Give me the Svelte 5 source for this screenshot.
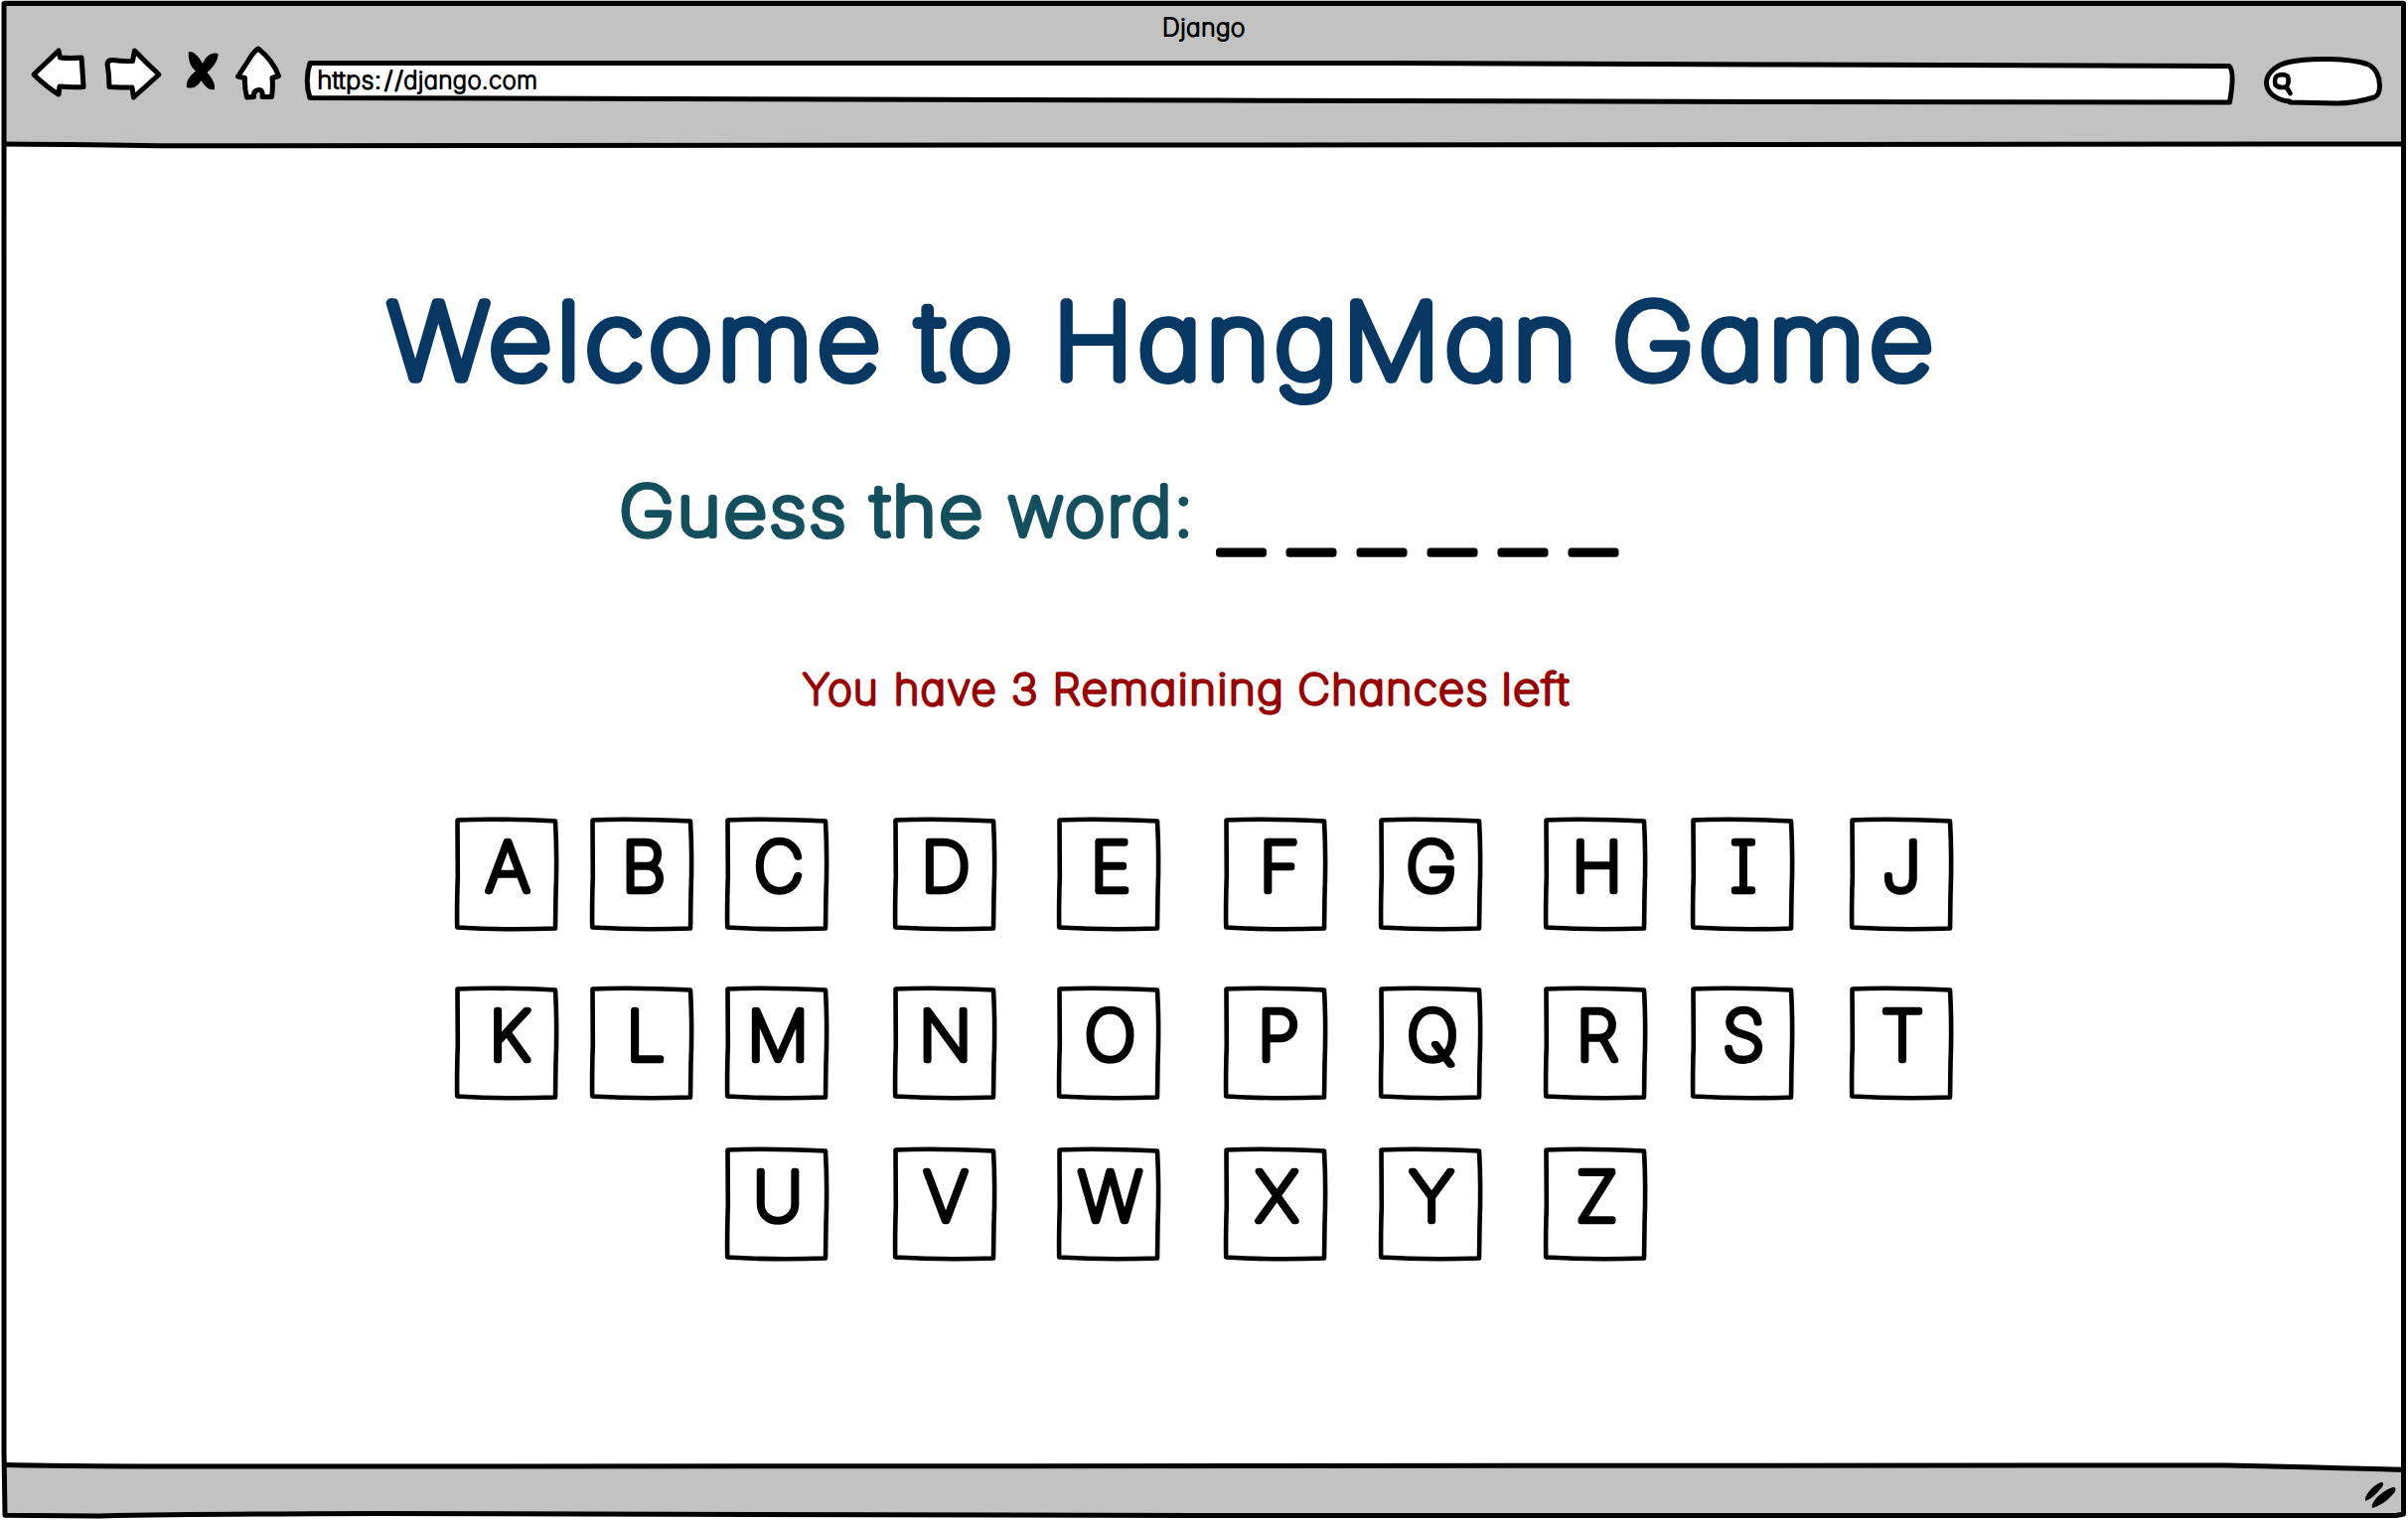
<script>
  // Each word carries its left edge and drawn width inside the line.
  const title = [
    { t: 'Welcome', x: 390, w: 501 },
    { t: 'to', x: 923, w: 101 },
    { t: 'HangMan', x: 1060, w: 532 },
    { t: 'Game', x: 1623, w: 328 }
  ];
  const guess = [
    { t: 'Guess', x: 623.5, w: 231 },
    { t: 'the', x: 877, w: 115 },
    { t: 'word:', x: 1014.5, w: 189 }
  ];
  const blanks = [1249.5, 1320, 1391, 1462, 1533, 1604];
  const chances = [
    { t: 'You', x: 808, w: 77 },
    { t: 'have', x: 900, w: 104 },
    { t: '3', x: 1018, w: 28 },
    { t: 'Remaining', x: 1059.5, w: 234 },
    { t: 'Chances', x: 1306.5, w: 192.5 },
    { t: 'left', x: 1511.5, w: 69 }
  ];
  const address = [
    { t: 'https:', x: 319.5, w: 65 },
    { t: '/', x: 387, w: 9 },
    { t: '/', x: 397.5, w: 9 },
    { t: 'django.com', x: 406.5, w: 135 }
  ];

  // Letter with the horizontal centre of its glyph inside the key.
  const rows = [
    [['A', 53], ['B', 54], ['C', 54], ['D', 53], ['E', 54], ['F', 56], ['G', 53], ['H', 53.5], ['I', 53], ['J', 52]],
    [['K', 55], ['L', 56], ['M', 53], ['N', 52.5], ['O', 53.5], ['P', 55], ['Q', 54], ['R', 54], ['S', 53], ['T', 53]],
    [null, null, ['U', 53], ['V', 53], ['W', 53.5], ['X', 53.5], ['Y', 53], ['Z', 53.5], null, null]
  ];
</script>

{#snippet words(list, y)}
  {#each list as word}
    <text x={word.x} {y} textLength={word.w} lengthAdjust="spacingAndGlyphs">{word.t}</text>
  {/each}
{/snippet}

<div class="window">
  <header>
    <div class="caption"><svg width="120" height="40"><text x="60" y="33.5" text-anchor="middle" textLength="84" lengthAdjust="spacingAndGlyphs">Django</text></svg></div>
    <nav>
      <svg class="back" width="60" height="60" viewBox="28 45 60 60">
        <path class="ink" d="M34 75 59 51 60.5 58Q70 59 82 58Q83 70 84 87.500Q72 88 60 87L59 95Q46 87 34 75Z" />
      </svg>
      <svg class="forward" width="64" height="60" viewBox="102 45 64 60">
        <path class="ink" d="M108 64Q109 60 114 60.500Q122 62 133.500 61.500L135.500 51Q147 63 160 75L134.500 98 133 88Q122 88 110 87.500Q110 75 108 64Z" />
      </svg>
      <svg class="stop" width="40" height="60" viewBox="184 45 40 60">
        <path d="M190 52C195 51 201 58 204 64C207 56 214 52 219.500 54C220 61 214 68 208.500 73C213 78 217 84 216 90C210 92 205 85 202.500 81C199 87 194 90 188 88C187 82 191 76 197 71.500C191 67 189 58 190 52Z" />
      </svg>
      <svg class="home" width="52" height="60" viewBox="234 43 52 60">
        <path class="ink" d="M260 49Q255 52 250 61L239.500 77 246.500 78.500Q246 88 248.500 98L255.500 97.500Q255 91 260.500 90.500Q265 90 264 97.500L273.500 97.500Q275 88 274 78.500L280.500 76.500Q275 61 260 49Z" />
      </svg>
      <svg class="address" width="1950" height="50" viewBox="304 58 1950 50">
        <path class="ink" d="M312 63.500L1400 63.500 1800 65 2244 66.500Q2250 72 2244.500 103L1800 102.500 1220 101 312 98.500Q306.500 82 312 63.500Z" />
        {@render words(address, 89)}
      </svg>
      <svg class="search" width="126" height="56" viewBox="2276 54 126 56">
        <path class="ink" d="M2305 102C2291 101 2281.500 93 2281.500 83C2282 72 2293 65 2304 62.500C2327 57.500 2366 59 2383 64.500C2392 68 2395.500 78 2395.500 86Q2395.500 96 2390 98Q2370 104 2353 104Q2330 103.500 2305 103" />
        <path class="lens" d="M2292 76.500Q2298 73.500 2303 77Q2305 84 2301 87.500Q2294 89 2290.500 85.500Q2289 79 2292 76.500ZM2301.500 87.500L2305.500 94" />
      </svg>
    </nav>
  </header>

  <main>
    <h1><svg width="2424" height="130">{@render words(title, 97)}</svg></h1>
    <div class="guess">
      <svg width="2424" height="110">
        <g class="prompt">{@render words(guess, 71)}</g>
        <g class="blanks">
          {#each blanks as x}<text {x} y="87" text-anchor="middle">_</text>{/each}
        </g>
      </svg>
    </div>
    <p><svg width="2424" height="60">{@render words(chances, 46.5)}</svg></p>
    <div class="keys">
      {#each rows as row}
        <div class="row">
          {#each row as key}
            {#if key}
              <button aria-label={key[0]}>
                <svg width="104" height="116" viewBox="0 0 104 116">
                  <path class="edge" d="M2.500 3.500Q40 1.500 101 4.500Q103 40 101.500 78L101 112.500Q50 114.500 2.200 111.500Q1.800 90 2.800 60Z" />
                  <text x={key[1]} y="75" text-anchor="middle">{key[0]}</text>
                </svg>
              </button>
            {:else}
              <span></span>
            {/if}
          {/each}
        </div>
      {/each}
    </div>
  </main>

  <footer>
    <svg width="40" height="32" viewBox="2376 1488 40 32">
      <path d="M2381 1511C2380 1504 2391 1493 2398 1492Q2401 1494 2396 1499Q2389 1508 2381 1511ZM2388 1518C2386 1511 2401 1498 2410 1497Q2414 1499 2408 1505Q2399 1515 2388 1518Z" />
    </svg>
  </footer>

  <svg class="frame" viewBox="0 0 2424 1530">
    <path d="M4 3.500H2419.500V1524L2412 1525.500 1200 1525.500 380 1523.500Q200 1524 100 1526L5 1525.200L4 1460 4 160Z" />
    <path d="M5 145Q100 145.500 160 146.800L500 146.500 2419 145" />
    <path d="M5 1474.500Q100 1476.500 300 1476L2240 1475Q2340 1477 2419 1479.500" />
  </svg>
</div>

<style>
  :global(body) { margin: 0; background: #fff; }
  .window {
    position: relative;
    width: 2424px;
    height: 1530px;
    display: grid;
    grid-template-rows: 146px 1fr 54px;
    font-family: Inter, sans-serif;
    font-weight: 100;
    font-feature-settings: 'cv11' 1, 'cv08' 1;
    overflow: hidden;
  }
  svg { display: block; overflow: visible; }
  text { stroke-linejoin: round; stroke-linecap: round; fill: currentColor; stroke: currentColor; }
  header, footer { background: #c2c2c2; margin: 0 4px; }
  header { padding-top: 3px; box-sizing: border-box; }
  .caption { height: 40px; display: flex; justify-content: center; }
  .caption svg { margin-top: -1px; }
  .caption text, .address text { font-size: 23.500px; stroke-width: 2px; letter-spacing: 0.03em; }
  nav { display: flex; align-items: flex-start; padding-left: 24px; }
  .back { margin-top: 2px; }
  .forward { margin: 2px 0 0 14px; }
  .stop { margin: 2px 0 0 18px; }
  .home { margin-left: 10px; }
  .address { margin: 15px 0 0 18px; }
  .search { margin: 11px 0 0 22px; }
  .ink { fill: #fff; stroke: #000; stroke-width: 5; stroke-linejoin: round; stroke-linecap: round; }
  .lens { fill: none; stroke: #000; stroke-width: 4.6; stroke-linejoin: round; stroke-linecap: round; }
  main { background: #fff; padding-top: 138px; }
  h1, p { margin: 0; font-weight: inherit; }
  h1 { color: #073763; height: 184px; font-size: 104px; }
  h1 text { stroke-width: 9.400px; letter-spacing: 0.045em; }
  .guess { height: 194px; font-size: 69px; }
  .prompt { color: #134f5c; }
  .prompt text { stroke-width: 6.200px; letter-spacing: 0.04em; }
  .blanks text { stroke-width: 7px; font-size: 102px; }
  p { color: #990000; height: 160px; font-size: 42.500px; }
  p text { stroke-width: 3.500px; letter-spacing: 0.035em; }
  .keys { display: flex; flex-direction: column; padding-left: 458px; }
  .row {
    display: grid;
    grid-template-columns: 136px 136px 168.500px 165.500px 168px 156px 166px 148px 160px 104px;
    height: 170px;
  }
  .row:nth-child(2) { height: 162px; }
  button { padding: 0; border: 0; background: none; width: 104px; height: 116px; color: #000; font: inherit; font-feature-settings: inherit; }
  .edge { fill: #fff; stroke: #000; stroke-width: 4.6; stroke-linejoin: round; }
  button text { font-size: 69px; stroke-width: 6.500px; }
  footer { display: flex; justify-content: flex-end; padding: 12px 4px 0 0; height: 38px; }
  .frame { position: absolute; inset: 0; width: 2424px; height: 1530px; pointer-events: none; }
  .frame path { fill: none; stroke: #000; stroke-width: 5; stroke-linejoin: round; }
</style>
